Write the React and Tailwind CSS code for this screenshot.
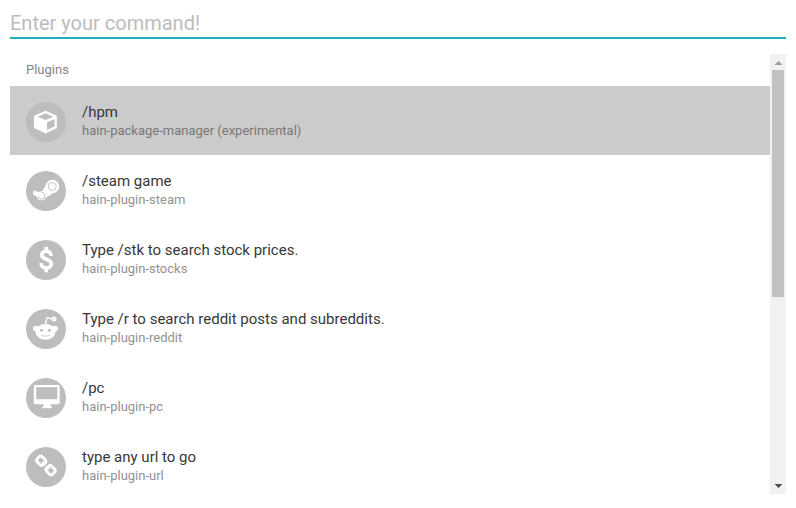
const CubeIcon = () => (
  <path
    fillRule="evenodd"
    d="M19.6 8.7 30.8 13.8V26L19.6 31.4 8 26V13.8ZM19.6 11.3 11.8 14.8 19.6 18 27.4 14.8ZM21 20.3V28L28.6 24.3V17.2Z"
  />
);

const SteamIcon = () => (
  <>
    <path d="M7.3 19.3 12.5 21 16.5 20 19.6 14.5A6.8 6.8 0 1 1 27 22.2L20 26.5A5 5 0 0 1 10.6 25.4L7.3 23.8Z" />
    <circle cx="26.3" cy="15.4" r="4" fill="none" stroke="#bdbdbd" strokeWidth="0.9" />
    <path d="M12 25.2A3.5 3.5 0 1 0 15.6 21.2" fill="none" stroke="#bdbdbd" strokeWidth="0.9" />
  </>
);

const DollarIcon = () => (
  <g fill="none" stroke="#fff">
    <path d="M20.2 6.8V11M20.2 28V32.2" strokeWidth="3.6" />
    <path d="M25.1 16C25.1 13.2 23.4 11.2 20.3 11.2 17.5 11.2 15.7 12.8 15.7 15.1 15.7 20.3 25.3 18.3 25.3 23.8 25.3 26.4 23.3 28 20.4 28 17.2 28 15.2 26.2 15.1 23" strokeWidth="3.7" />
  </g>
);

const RedditIcon = () => (
  <>
    <circle cx="9.9" cy="19.6" r="2.8" />
    <circle cx="29.1" cy="19.6" r="2.8" />
    <ellipse cx="19.5" cy="22.8" rx="10" ry="7.9" />
    <path d="M19.5 16 20.8 8.8 27 10" fill="none" stroke="#fff" strokeWidth="1.4" />
    <circle cx="28" cy="10" r="2.5" />
    <circle cx="28" cy="10" r="0.7" fill="#bdbdbd" />
    <circle cx="15.5" cy="21.3" r="1.5" fill="#bdbdbd" />
    <circle cx="23.4" cy="21.3" r="1.5" fill="#bdbdbd" />
    <path d="M15.3 26.2Q19.5 28.4 23.7 26.2" fill="none" stroke="#bdbdbd" strokeWidth="0.8" />
  </>
);

const DesktopIcon = () => (
  <path
    fillRule="evenodd"
    d="M9.3 7H32.2Q33.7 7 33.7 8.5V24.7Q33.7 26.2 32.2 26.2H24.6V28L26 29V30.2H16.2V29L17.6 28V26.2H9.3Q7.8 26.2 7.8 24.7V8.5Q7.8 7 9.3 7ZM10.2 9.2V21.3H31.3V9.2Z"
  />
);

const LinkIcon = () => (
  <g fill="none" stroke="#fff" strokeWidth="3">
    <rect x="-4.3" y="-3.6" width="8.6" height="7.2" rx="2.6" transform="translate(15.2 13.8) rotate(45)" />
    <rect x="-4.3" y="-3.6" width="8.6" height="7.2" rx="2.6" transform="translate(24.6 23.2) rotate(45)" />
    <path d="M16.2 14.8 18.5 17.1M21.2 19.8 23.5 22.1" strokeWidth="1.8" />
  </g>
);

const plugins = [
  { title: "/hpm", name: "hain-package-manager (experimental)", Icon: CubeIcon },
  { title: "/steam game", name: "hain-plugin-steam", Icon: SteamIcon },
  { title: "Type /stk to search stock prices.", name: "hain-plugin-stocks", Icon: DollarIcon },
  { title: "Type /r to search reddit posts and subreddits.", name: "hain-plugin-reddit", Icon: RedditIcon },
  { title: "/pc", name: "hain-plugin-pc", Icon: DesktopIcon },
  { title: "type any url to go", name: "hain-plugin-url", Icon: LinkIcon },
];

function PluginRow({ title, name, Icon, selected }) {
  return (
    <li className={`flex h-[69px] shrink-0 items-start gap-4 px-4 pt-4 ${selected ? "bg-[#cbcbcb]" : ""}`}>
      <svg viewBox="0 0 40 40" fill="#fff" className="size-10 shrink-0 rounded-full bg-[#bdbdbd]">
        <Icon />
      </svg>
      <div className="whitespace-nowrap">
        <div className="h-5 text-[15px] leading-5 text-[#383838]">{title}</div>
        <div className={`text-[13px] leading-[18px] ${selected ? "text-[#787878]" : "text-[#929292]"}`}>{name}</div>
      </div>
    </li>
  );
}

export default function App() {
  return (
    <main className="flex h-[508px] w-[796px] flex-col overflow-hidden bg-white px-[10px] font-['Roboto',sans-serif]">
      <input
        aria-label="Command"
        placeholder="Enter your command!"
        className="mt-[7px] h-[32px] shrink-0 border-b-2 border-[#21aebf] pt-[2px] text-[20px] leading-[28px] outline-none placeholder:text-[#bcbcbc]"
      />
      <div className="mt-[15px] flex h-[440px]">
        <section className="flex min-w-0 flex-1 flex-col overflow-hidden">
          <h2 className="h-8 shrink-0 px-4 text-[13px] leading-8 text-[#858585]">Plugins</h2>
          <ul className="flex flex-col">
            {plugins.map((plugin, i) => (
              <PluginRow key={plugin.name} {...plugin} selected={i === 0} />
            ))}
          </ul>
        </section>
        <div className="flex w-4 flex-col items-center bg-[#f1f1f1]">
          <svg viewBox="0 0 16 16" className="size-4 shrink-0" shapeRendering="crispEdges">
            <path d="M4 11H12L8 7Z" fill="#a0a0a0" />
          </svg>
          <div className="h-[227px] w-3 bg-[#c1c1c1]" />
          <svg viewBox="0 0 16 16" className="mt-auto size-4 shrink-0" shapeRendering="crispEdges">
            <path d="M4 6H12L8 10Z" fill="#505050" />
          </svg>
        </div>
      </div>
    </main>
  );
}
